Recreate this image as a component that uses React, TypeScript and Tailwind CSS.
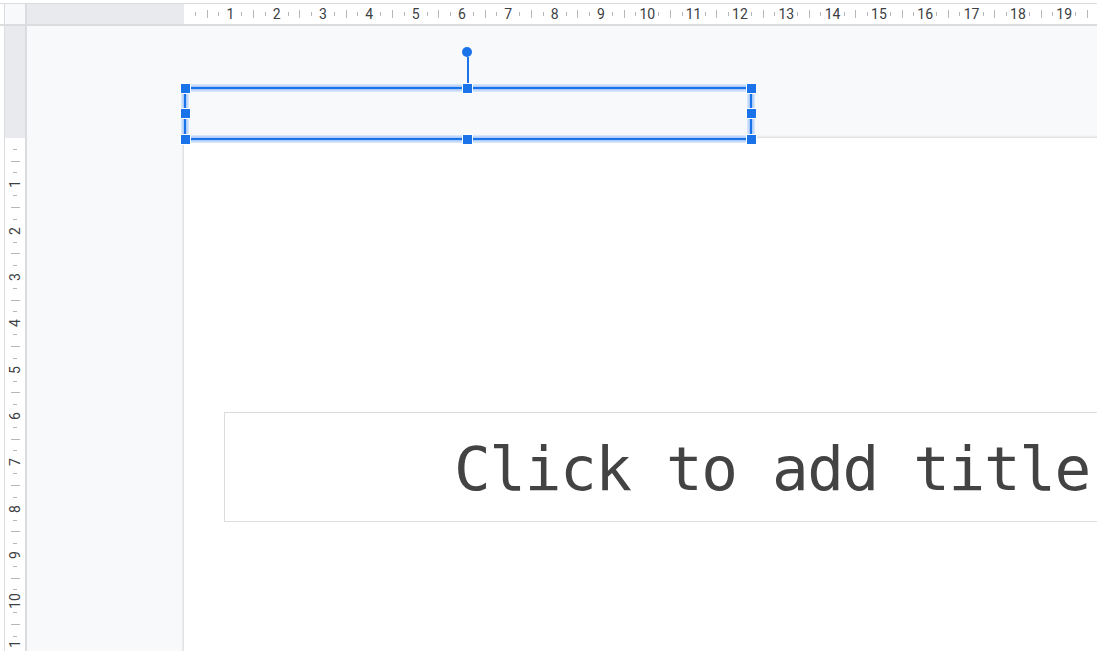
import React from "react";

const topCells = Array.from({ length: 20 }, (_, i) => i + 1);
const sideCells = Array.from({ length: 12 }, (_, i) => i + 1);

function TopRulerCell({ n, last }: { n: number; last?: boolean }) {
  return (
    <div className="w-[46.33px] shrink-0 grid grid-cols-4 h-full">
      <div className="flex items-center justify-center">
        <div className="w-px h-[4px] bg-[#b4b8bd]" />
      </div>
      <div className="flex items-center justify-center">
        <div className="w-px h-[8px] bg-[#b4b8bd]" />
      </div>
      <div className="flex items-center justify-center">
        <div className="w-px h-[4px] bg-[#b4b8bd]" />
      </div>
      <div className="flex items-center justify-center">
        {!last && (
          <span className="text-[14px] leading-none text-[#3c4043] whitespace-nowrap">{n}</span>
        )}
      </div>
    </div>
  );
}

function SideRulerCell({ n }: { n: number }) {
  return (
    <div className="h-[46.33px] shrink-0 grid grid-rows-4 w-full">
      <div className="flex items-center justify-center">
        <div className="h-px w-[4px] bg-[#b4b8bd]" />
      </div>
      <div className="flex items-center justify-center">
        <div className="h-px w-[9px] bg-[#b4b8bd]" />
      </div>
      <div className="flex items-center justify-center">
        <div className="h-px w-[4px] bg-[#b4b8bd]" />
      </div>
      <div className="flex items-center justify-center">
        <span className="-rotate-90 text-[14px] leading-none text-[#3c4043] whitespace-nowrap">{n}</span>
      </div>
    </div>
  );
}

function Handle({ className }: { className: string }) {
  return (
    <div
      className={
        "absolute w-[11px] h-[11px] bg-[#1a73e8] border border-white " + className
      }
    />
  );
}

export default function App() {
  return (
    <div className="relative w-[1097px] h-[651px] overflow-hidden bg-white flex flex-col font-['Roboto',sans-serif]">
      <div className="h-[3px] shrink-0" />

      {/* top ruler */}
      <div className="flex h-[23px] shrink-0 border-t border-b-2 border-[#dadce0]">
        <div className="w-[4px] shrink-0 bg-white" />
        <div className="w-[23px] shrink-0 border-l border-r-2 border-[#dadce0] bg-[#f8f9fa]" />
        <div className="w-[157px] shrink-0 bg-[#e8eaed]" />
        <div className="flex-1 min-w-0 bg-white flex overflow-hidden">
          <div className="w-[5.79px] shrink-0" />
          {topCells.map((n) => (
            <TopRulerCell n={n} key={n} last={n === topCells.length} />
          ))}
        </div>
      </div>

      <div className="flex flex-1 min-h-0">
        <div className="w-[4px] shrink-0 bg-white" />
        {/* side ruler */}
        <div className="w-[23px] shrink-0 border-l border-r-2 border-[#dadce0] flex flex-col">
          <div className="h-[112px] shrink-0 bg-[#e8eaed]" />
          <div className="flex-1 min-h-0 bg-white flex flex-col overflow-hidden">
            <div className="h-[5.79px] shrink-0" />
            {sideCells.map((n) => (
              <SideRulerCell n={n} key={n} />
            ))}
          </div>
        </div>

        {/* canvas */}
        <div className="flex-1 min-w-0 flex flex-col bg-[#f8f9fa]">
          <div className="h-[112px] shrink-0" />
          <div className="flex flex-1 min-h-0">
            <div className="w-[157px] shrink-0" />
            <div className="flex-1 min-w-0 bg-white overflow-hidden shadow-[0_0_2px_1px_rgba(60,64,67,0.18)]">
              <div className="ml-[40px] mt-[274px] h-[110px] w-[1112px] border border-[#dadce0] flex items-center justify-start pl-[229px] pt-[3px]">
                <span className="font-['DejaVu_Sans_Mono',monospace] text-[61px] tracking-[-1.4px] leading-none text-[#434343] whitespace-nowrap">
                  Click to add title
                </span>
              </div>
            </div>
          </div>
        </div>
      </div>

      {/* selection overlay */}
      <div className="absolute left-[184px] top-[87px] w-[568px] h-[53px] border-2 border-[#1a73e8] shadow-[0_0_0_1.5px_#aecbfa,0_0_0_3px_#d8e6fc,inset_0_0_0_1.5px_#aecbfa,inset_0_0_0_3px_#d8e6fc]" />
      <div className="absolute left-[467px] top-[57px] w-[1.5px] h-[27px] bg-[#1a73e8]" />
      <div className="absolute left-[462px] top-[47px] w-[10px] h-[10px] rounded-full bg-[#1a73e8]" />
      <Handle className="left-[180px] top-[83px]" />
      <Handle className="left-[462px] top-[83px]" />
      <Handle className="left-[746px] top-[83px]" />
      <Handle className="left-[180px] top-[108px]" />
      <Handle className="left-[746px] top-[108px]" />
      <Handle className="left-[180px] top-[134px]" />
      <Handle className="left-[462px] top-[134px]" />
      <Handle className="left-[746px] top-[134px]" />
    </div>
  );
}
